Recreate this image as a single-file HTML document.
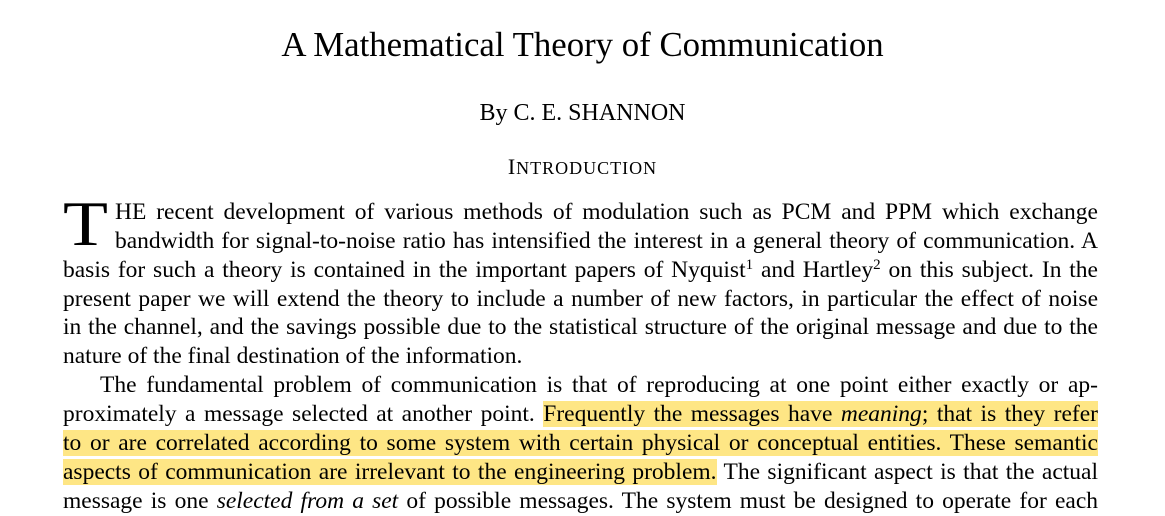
<!DOCTYPE html>
<html><head><meta charset="utf-8"><style>
body{margin:0;background:#fff;width:1165px;height:514px;overflow:hidden;position:relative;font-family:"Liberation Serif",serif;color:#000}
.c{position:absolute;left:0;width:1165px;text-align:center;white-space:nowrap}
.l{position:absolute;left:63px;width:1035px;font-size:23.5px;line-height:29px;height:29px;text-align:justify;text-align-last:justify;white-space:nowrap}
.n{text-align-last:left}
.h{background:#fee685}
sup{font-size:15px;line-height:0;vertical-align:8px}
</style></head><body>
<div class="c" style="top:23px;font-size:34.8px;line-height:44px">A Mathematical Theory of Communication</div>
<div class="c" style="top:98px;font-size:24px;line-height:30px">By C. E. SHANNON</div>
<div class="c" style="top:154px;font-size:22px;line-height:26px;letter-spacing:1px">I<span style="font-size:18px">NTRODUCTION</span></div>
<div style="position:absolute;left:63px;top:192px;font-size:64px;line-height:64px;transform:scaleX(1.15);transform-origin:left top">T</div>
<div class="l" style="top:198px;left:115px;width:983px">HE recent development of various methods of modulation such as PCM and PPM which exchange</div>
<div class="l" style="top:227px;left:115px;width:983px">bandwidth for signal-to-noise ratio has intensified the interest in a general theory of communication. A</div>
<div class="l" style="top:256px">basis for such a theory is contained in the important papers of Nyquist<sup>1</sup> and Hartley<sup>2</sup> on this subject. In the</div>
<div class="l" style="top:285px">present paper we will extend the theory to include a number of new factors, in particular the effect of noise</div>
<div class="l" style="top:313px">in the channel, and the savings possible due to the statistical structure of the original message and due to the</div>
<div class="l n" style="top:342px">nature of the final destination of the information.</div>
<div class="l" style="top:371px;left:100px;width:998px">The fundamental problem of communication is that of reproducing at one point either exactly or ap-</div>
<div class="l" style="top:400px">proximately a message selected at another point. <span class="h">Frequently the messages have <i>meaning</i>; that is they refer</span></div>
<div class="l" style="top:429px"><span class="h">to or are correlated according to some system with certain physical or conceptual entities. These semantic</span></div>
<div class="l" style="top:458px"><span class="h">aspects of communication are irrelevant to the engineering problem.</span> The significant aspect is that the actual</div>
<div class="l" style="top:487px">message is one <i>selected from a set</i> of possible messages. The system must be designed to operate for each</div>
</body></html>
